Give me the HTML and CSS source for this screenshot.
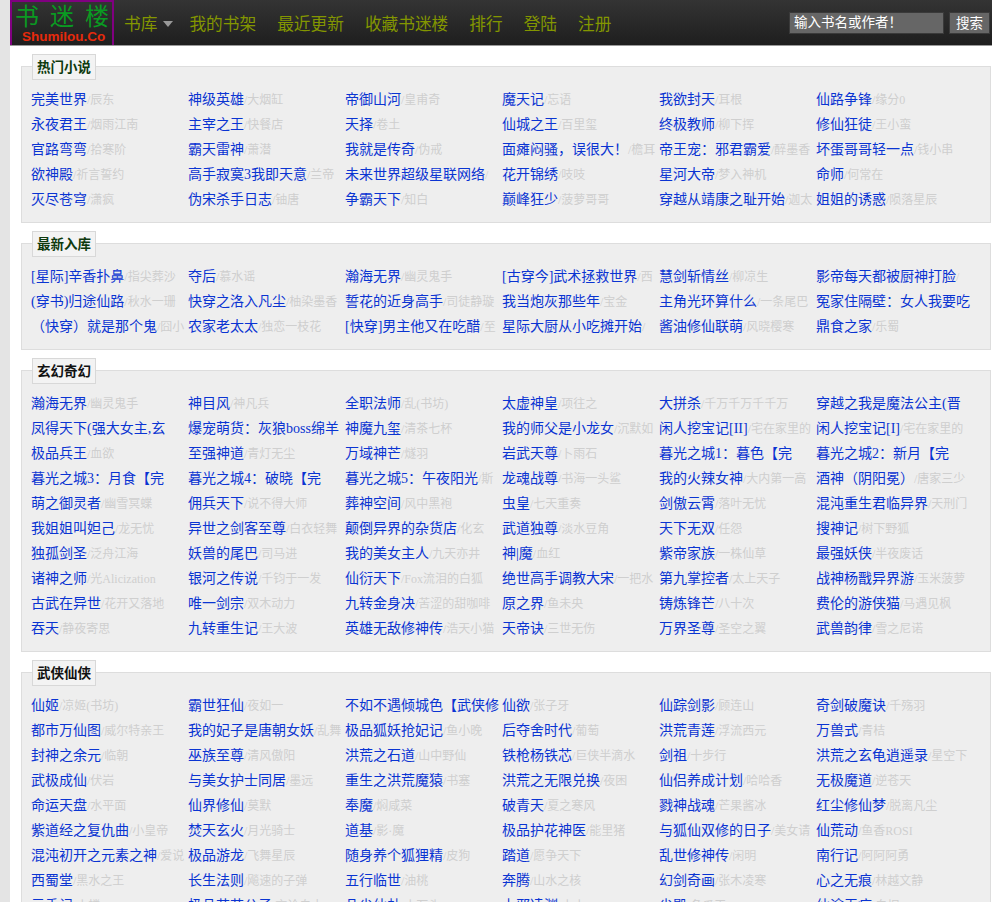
FILE: index.html
```html
<!DOCTYPE html>
<html lang="zh-CN">
<head>
<meta charset="utf-8">
<title>书迷楼</title>
<link rel="stylesheet" href="styles.css">
</head>
<body>
<div class="page">
<header class="top">
  <a class="logo"><span class="logo-cn"><span>书</span><span>迷</span><span>楼</span></span><span class="logo-en">Shumilou.Co</span></a>
  <nav class="nav">
    <a class="nav-item">书库<i class="caret"></i></a>
    <a class="nav-item">我的书架</a>
    <a class="nav-item">最近更新</a>
    <a class="nav-item">收藏书迷楼</a>
    <a class="nav-item">排行</a>
    <a class="nav-item">登陆</a>
    <a class="nav-item">注册</a>
  </nav>
  <form class="search">
    <input class="search-input" type="text" value="输入书名或作者！">
    <button class="search-btn" type="button">搜索</button>
  </form>
</header>
<main class="content">
<section class="box">
  <h2 class="box-title green">热门小说</h2>
  <ul class="list">
    <li><a>完美世界</a><span>/辰东</span></li><li><a>神级英雄</a><span>/大烟缸</span></li><li><a>帝御山河</a><span>/皇甫奇</span></li><li><a>魔天记</a><span>/忘语</span></li><li><a>我欲封天</a><span>/耳根</span></li><li><a>仙路争锋</a><span>/缘分0</span></li>
    <li><a>永夜君王</a><span>/烟雨江南</span></li><li><a>主宰之王</a><span>/快餐店</span></li><li><a>天择</a><span>/卷土</span></li><li><a>仙城之王</a><span>/百里玺</span></li><li><a>终极教师</a><span>/柳下挥</span></li><li><a>修仙狂徒</a><span>/王小蛮</span></li>
    <li><a>官路弯弯</a><span>/拾寒阶</span></li><li><a>霸天雷神</a><span>/萧潜</span></li><li><a>我就是传奇</a><span>/伪戒</span></li><li><a>面瘫闷骚，误很大！</a><span>/檐耳</span></li><li><a>帝王宠：邪君霸爱</a><span>/醉墨香</span></li><li><a>坏蛋哥哥轻一点</a><span>/钱小串</span></li>
    <li><a>欲神殿</a><span>/祈言誓约</span></li><li><a>高手寂寞3我即天意</a><span>/兰帝</span></li><li><a>未来世界超级星联网络</a><span>/</span></li><li><a>花开锦绣</a><span>/吱吱</span></li><li><a>星河大帝</a><span>/梦入神机</span></li><li><a>命师</a><span>/何常在</span></li>
    <li><a>灭尽苍穹</a><span>/潇疯</span></li><li><a>伪宋杀手日志</a><span>/铀唐</span></li><li><a>争霸天下</a><span>/知白</span></li><li><a>巅峰狂少</a><span>/菠萝哥哥</span></li><li><a>穿越从靖康之耻开始</a><span>/迦太</span></li><li><a>姐姐的诱惑</a><span>/陨落星辰</span></li>
  </ul>
</section>
<section class="box">
  <h2 class="box-title green">最新入库</h2>
  <ul class="list">
    <li><a>[星际]辛香扑鼻</a><span>/指尖葬沙</span></li><li><a>夺后</a><span>/慕水谣</span></li><li><a>瀚海无界</a><span>/幽灵鬼手</span></li><li><a>[古穿今]武术拯救世界</a><span>/西</span></li><li><a>慧剑斩情丝</a><span>/柳凉生</span></li><li><a>影帝每天都被厨神打脸</a><span>/</span></li>
    <li><a>(穿书)归途仙路</a><span>/秋水一珊</span></li><li><a>快穿之洛入凡尘</a><span>/柚染墨香</span></li><li><a>誓花的近身高手</a><span>/司徒静璇</span></li><li><a>我当炮灰那些年</a><span>/宝金</span></li><li><a>主角光环算什么</a><span>/一条尾巴</span></li><li><a>冤家住隔壁：女人我要吃</a></li>
    <li><a>（快穿）就是那个鬼</a><span>/囧小</span></li><li><a>农家老太太</a><span>/独恋一枝花</span></li><li><a>[快穿]男主他又在吃醋</a><span>/至</span></li><li><a>星际大厨从小吃摊开始</a><span>/</span></li><li><a>酱油修仙联萌</a><span>/风晓樱寒</span></li><li><a>鼎食之家</a><span>/乐蜀</span></li>
  </ul>
</section>
<section class="box">
  <h2 class="box-title">玄幻奇幻</h2>
  <ul class="list">
    <li><a>瀚海无界</a><span>/幽灵鬼手</span></li><li><a>神目风</a><span>/神凡兵</span></li><li><a>全职法师</a><span>/乱(书坊)</span></li><li><a>太虚神皇</a><span>/项往之</span></li><li><a>大拼杀</a><span>/千万千万千千万</span></li><li><a>穿越之我是魔法公主(晋</a></li>
    <li><a>凤得天下(强大女主,玄</a></li><li><a>爆宠萌货：灰狼boss绵羊</a></li><li><a>神魔九玺</a><span>/清茶七杯</span></li><li><a>我的师父是小龙女</a><span>/沉默如</span></li><li><a>闲人挖宝记[II]</a><span>/宅在家里的</span></li><li><a>闲人挖宝记[I]</a><span>/宅在家里的</span></li>
    <li><a>极品兵王</a><span>/血欲</span></li><li><a>至强神道</a><span>/青灯无尘</span></li><li><a>万域神芒</a><span>/燧羽</span></li><li><a>岩武天尊</a><span>/卜雨石</span></li><li><a>暮光之城1：暮色【完</a></li><li><a>暮光之城2：新月【完</a></li>
    <li><a>暮光之城3：月食【完</a></li><li><a>暮光之城4：破晓【完</a></li><li><a>暮光之城5：午夜阳光</a><span>/斯</span></li><li><a>龙魂战尊</a><span>/书海一头鲨</span></li><li><a>我的火辣女神</a><span>/大内第一高</span></li><li><a>酒神（阴阳冕）</a><span>/唐家三少</span></li>
    <li><a>萌之御灵者</a><span>/幽雪冥蝶</span></li><li><a>佣兵天下</a><span>/说不得大师</span></li><li><a>葬神空间</a><span>/风中黑袍</span></li><li><a>虫皇</a><span>/七天重奏</span></li><li><a>剑傲云霄</a><span>/落叶无忧</span></li><li><a>混沌重生君临异界</a><span>/天刑门</span></li>
    <li><a>我姐姐叫妲己</a><span>/龙无忧</span></li><li><a>异世之剑客至尊</a><span>/白衣轻舞</span></li><li><a>颠倒异界的杂货店</a><span>/化玄</span></li><li><a>武道独尊</a><span>/淡水豆角</span></li><li><a>天下无双</a><span>/任怨</span></li><li><a>搜神记</a><span>/树下野狐</span></li>
    <li><a>独孤剑圣</a><span>/泛舟江海</span></li><li><a>妖兽的尾巴</a><span>/司马进</span></li><li><a>我的美女主人</a><span>/九天亦井</span></li><li><a>神|魔</a><span>/血红</span></li><li><a>紫帝家族</a><span>/一株仙草</span></li><li><a>最强妖侠</a><span>/半夜废话</span></li>
    <li><a>诸神之师</a><span>/光Alicization</span></li><li><a>银河之传说</a><span>/千钧于一发</span></li><li><a>仙衍天下</a><span>/Fox流泪的白狐</span></li><li><a>绝世高手调教大宋</a><span>/一把水</span></li><li><a>第九掌控者</a><span>/太上天子</span></li><li><a>战神杨戬异界游</a><span>/玉米菠萝</span></li>
    <li><a>古武在异世</a><span>/花开又落地</span></li><li><a>唯一剑宗</a><span>/双木动力</span></li><li><a>九转金身决</a><span>/苦涩的甜咖啡</span></li><li><a>原之界</a><span>/鱼未央</span></li><li><a>铸炼锋芒</a><span>/八十次</span></li><li><a>费伦的游侠猫</a><span>/马遇见枫</span></li>
    <li><a>吞天</a><span>/静夜寄思</span></li><li><a>九转重生记</a><span>/王大波</span></li><li><a>英雄无敌修神传</a><span>/浩天小猫</span></li><li><a>天帝诀</a><span>/三世无伤</span></li><li><a>万界圣尊</a><span>/圣空之翼</span></li><li><a>武兽韵律</a><span>/雪之尼诺</span></li>
  </ul>
</section>
<section class="box">
  <h2 class="box-title">武侠仙侠</h2>
  <ul class="list">
    <li><a>仙姬</a><span>/凉姬(书坊)</span></li><li><a>霸世狂仙</a><span>/夜如一</span></li><li><a>不如不遇倾城色【武侠修</a></li><li><a>仙欲</a><span>/张子牙</span></li><li><a>仙踪剑影</a><span>/顾连山</span></li><li><a>奇剑破魔诀</a><span>/千殇羽</span></li>
    <li><a>都市万仙图</a><span>/威尔特亲王</span></li><li><a>我的妃子是唐朝女妖</a><span>/乱舞</span></li><li><a>极品狐妖抢妃记</a><span>/鱼小晚</span></li><li><a>后夺舍时代</a><span>/葡萄</span></li><li><a>洪荒青莲</a><span>/浮流西元</span></li><li><a>万兽式</a><span>/青桔</span></li>
    <li><a>封神之余元</a><span>/临朝</span></li><li><a>巫族至尊</a><span>/清风傲阳</span></li><li><a>洪荒之石道</a><span>/山中野仙</span></li><li><a>铁枪杨铁芯</a><span>/巨侠半滴水</span></li><li><a>剑祖</a><span>/十步行</span></li><li><a>洪荒之玄龟逍遥录</a><span>/星空下</span></li>
    <li><a>武极成仙</a><span>/伏岩</span></li><li><a>与美女护士同居</a><span>/墨远</span></li><li><a>重生之洪荒魔猿</a><span>/书塞</span></li><li><a>洪荒之无限兑换</a><span>/夜困</span></li><li><a>仙侣养成计划</a><span>/哈哈香</span></li><li><a>无极魔道</a><span>/逆苍天</span></li>
    <li><a>命运天盘</a><span>/水平面</span></li><li><a>仙界修仙</a><span>/莫默</span></li><li><a>奉魔</a><span>/焖咸菜</span></li><li><a>破青天</a><span>/夏之寒风</span></li><li><a>戮神战魂</a><span>/芒果酱冰</span></li><li><a>红尘修仙梦</a><span>/脱离凡尘</span></li>
    <li><a>紫道经之复仇曲</a><span>/小皇帝</span></li><li><a>焚天玄火</a><span>/月光骑士</span></li><li><a>道基</a><span>/影·魔</span></li><li><a>极品护花神医</a><span>/能里猪</span></li><li><a>与狐仙双修的日子</a><span>/美女请</span></li><li><a>仙荒动</a><span>/鱼香ROSI</span></li>
    <li><a>混沌初开之元素之神</a><span>/爱说</span></li><li><a>极品游龙</a><span>/飞舞星辰</span></li><li><a>随身养个狐狸精</a><span>/皮狗</span></li><li><a>踏道</a><span>/愿争天下</span></li><li><a>乱世修神传</a><span>/闲明</span></li><li><a>南行记</a><span>/阿阿阿勇</span></li>
    <li><a>西蜀堂</a><span>/黑水之王</span></li><li><a>长生法则</a><span>/飚速的子弹</span></li><li><a>五行临世</a><span>/油桃</span></li><li><a>奔腾</a><span>/山水之核</span></li><li><a>幻剑奇画</a><span>/张木凌寒</span></li><li><a>心之无痕</a><span>/林越文静</span></li>
    <li><a>元香记</a><span>/小楼</span></li><li><a>极品花花公子</a><span>/言论自由</span></li><li><a>凡尘仙劫</a><span>/小石头</span></li><li><a>上邪凌渊</a><span>/小小</span></li><li><a>尘殿</a><span>/冬瓜王</span></li><li><a>仙途无痕</a><span>/白桐</span></li>
  </ul>
</section>
</main>
</div>
</body>
</html>
```
FILE: styles.css
```css
* { box-sizing: border-box; }
html, body { margin: 0; padding: 0; height: 902px; overflow: hidden; }
body {
  background: #e4e4e4;
  font-family: "Liberation Serif", "Noto Sans CJK SC", serif;
  font-size: 14px;
}
.page {
  height: 902px;
  margin-left: 10px;
  background: #fff;
  overflow: hidden;
}
.top {
  display: flex;
  align-items: flex-start;
  height: 46px;
  background: linear-gradient(#343434, #1e1e1e);
  border-bottom: 1px solid #9a9a9a;
}
.logo {
  display: flex;
  flex-direction: column;
  align-items: center;
  flex: none;
  width: 104px;
  height: 45px;
  border: 2px solid #800080;
  border-bottom: 0;
}
.logo-cn {
  display: flex;
  justify-content: space-between;
  width: 94px;
  height: 26px;
  font: 24px/26px "Noto Sans CJK SC", sans-serif;
  color: #0a9a22;
}
.logo-en {
  margin-top: 1px;
  width: 100px;
  padding-left: 10px;
  font: 700 13.5px/16px "Liberation Sans", sans-serif;
  color: #e62a0c;
  white-space: nowrap;
}
.nav {
  display: flex;
  gap: 21px;
  margin-left: 10px;
  height: 45px;
  align-items: center;
  font: 16.7px/24px "Noto Sans CJK SC", sans-serif;
  color: #839600;
}
.nav-item { display: flex; align-items: center; white-space: nowrap; }
.caret {
  margin: 2px -5px 0 6px;
  width: 0;
  height: 0;
  border-left: 5px solid transparent;
  border-right: 5px solid transparent;
  border-top: 6px solid #999;
}
.search {
  display: flex;
  gap: 5px;
  margin: 12px 2px 0 auto;
}
.search-input {
  width: 155px;
  height: 22px;
  padding: 0 0 5px 4px;
  border: 1px solid #3a3a3a;
  background: #666;
  color: #fff;
  font: 13.5px/18px "Noto Sans CJK SC", sans-serif;
  outline: 0;
}
.search-btn {
  width: 41px;
  height: 22px;
  padding: 0 0 6px;
  border: 1px solid #3a3a3a;
  background: #666;
  color: #fff;
  font: 13.5px/18px "Noto Sans CJK SC", sans-serif;
}
.content { padding: 20px 1px 0 11px; }
.box {
  background: #eee;
  border: 1px solid #ddd;
  padding: 0 0 10px 9px;
  margin-bottom: 20px;
}
.box-title {
  width: 64px;
  height: 26px;
  margin: -13px 0 7px 1px;
  background: #f3f3f3;
  border: 1px solid #d8d8d8;
  font: 700 13.5px/22px "Noto Sans CJK SC", sans-serif;
  color: #111;
  text-align: center;
}
.box-title.green { color: #0e3a0e; }
.list {
  display: grid;
  grid-template-columns: repeat(6, 157px);
  list-style: none;
  margin: 0;
  padding: 0;
}
.list li {
  height: 25px;
  line-height: 25px;
  white-space: nowrap;
  overflow: hidden;
}
.list a { color: #0a34d2; font-size: 14px; }
.list span { color: #cfcfcf; font-size: 12px; }
```
